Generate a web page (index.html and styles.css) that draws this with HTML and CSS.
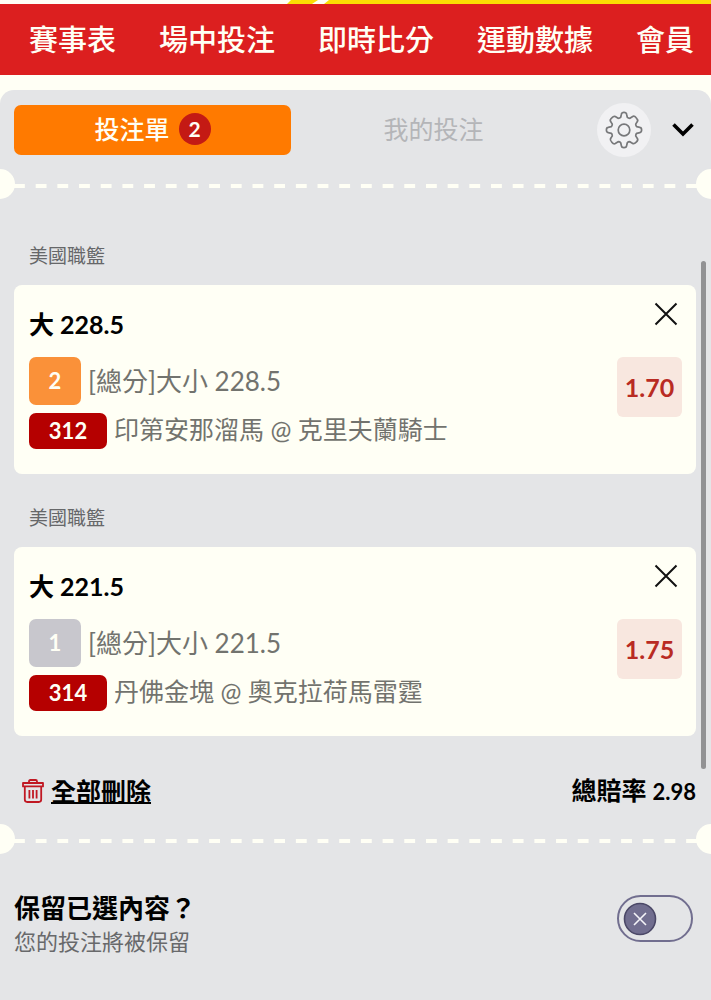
FILE: index.html
```html
<!DOCTYPE html>
<html lang="zh-Hant">
<head>
  <meta charset="UTF-8">
  <meta name="viewport" content="width=device-width, initial-scale=1.0">
  <title>投注單</title>
  <link rel="stylesheet" href="styles.css">
</head>
<body>
  <div class="top-strip">
    <svg width="100%" height="4">
      <path d="M291 0h27l-6 4h-25z" fill="#fbdd04"/>
      <path d="M329 0h4000v4H324z" fill="#fbdd04"/>
    </svg>
  </div>
  <nav class="main-nav">
    <a href="#">賽事表</a>
    <a href="#">場中投注</a>
    <a href="#">即時比分</a>
    <a href="#">運動數據</a>
    <a href="#">會員</a>
  </nav>

  <main class="slip">
    <div class="slip-header">
      <div class="tabs">
        <button class="tab active">投注單 <span class="count">2</span></button>
        <button class="tab">我的投注</button>
      </div>
      <button class="settings" aria-label="設定">
        <svg width="38" height="38" viewBox="0 0 38 38" fill="none" stroke="#77787a" stroke-width="1.7" stroke-linejoin="round">
          <path d="M16.4 3.2Q16.7 1.4 19 1.4T21.6 3.2L22.3 6.2Q23.1 7.3 24.9 7.3L27.7 5.5Q29.3 4.6 31.2 6.8Q33.2 8.7 32.5 10.3L30.7 13.1Q30.7 14.9 31.8 15.7L34.8 16.4Q36.6 16.7 36.6 19T34.8 21.6L31.8 22.3Q30.7 23.1 30.7 24.9L32.5 27.7Q33.4 29.3 31.2 31.2Q29.3 33.2 27.7 32.5L24.9 30.7Q23.1 30.7 22.3 31.8L21.6 34.8Q21.3 36.6 19 36.6T16.4 34.8L15.7 31.8Q14.9 30.7 13.1 30.7L10.3 32.5Q8.7 33.4 6.8 31.2Q4.8 29.3 5.5 27.7L7.3 24.9Q7.3 23.1 6.2 22.3L3.2 21.6Q1.4 21.3 1.4 19T3.2 16.4L6.2 15.7Q7.3 14.9 7.3 13.1L5.5 10.3Q4.6 8.7 6.8 6.8Q8.7 4.8 10.3 5.5L13.1 7.3Q14.9 7.3 15.7 6.2Z"/>
          <circle cx="19" cy="19" r="5.8"/>
        </svg>
      </button>
      <button class="collapse" aria-label="收起">
        <svg width="22" height="14" viewBox="0 0 22 14" fill="none" stroke="#000" stroke-width="3.6">
          <path d="M1.5 1.5L11 11L20.5 1.5"/>
        </svg>
      </button>
    </div>

    <div class="divider">
      <svg height="4"><line x1="0" y1="2" x2="100%" y2="2" pathLength="63"/></svg>
    </div>

    <div class="bets">
      <section class="bet">
        <h2 class="league">美國職籃</h2>
        <div class="card">
          <div class="card-head">
            <h3>大 228.5</h3>
            <button class="close" aria-label="移除">
              <svg width="24" height="24" viewBox="0 0 24 24" stroke="#111" stroke-width="2"><path d="M1.5 1.5l21 21M22.5 1.5l-21 21"/></svg>
            </button>
          </div>
          <div class="card-body">
            <div class="lines">
              <div class="line"><span class="badge pick orange">2</span>[總分]大小 228.5</div>
              <div class="line teams"><span class="badge game">312</span>印第安那溜馬 @ 克里夫蘭騎士</div>
            </div>
            <span class="odds">1.70</span>
          </div>
        </div>
      </section>

      <section class="bet">
        <h2 class="league">美國職籃</h2>
        <div class="card">
          <div class="card-head">
            <h3>大 221.5</h3>
            <button class="close" aria-label="移除">
              <svg width="24" height="24" viewBox="0 0 24 24" stroke="#111" stroke-width="2"><path d="M1.5 1.5l21 21M22.5 1.5l-21 21"/></svg>
            </button>
          </div>
          <div class="card-body">
            <div class="lines">
              <div class="line"><span class="badge pick grey">1</span>[總分]大小 221.5</div>
              <div class="line teams"><span class="badge game">314</span>丹佛金塊 @ 奧克拉荷馬雷霆</div>
            </div>
            <span class="odds">1.75</span>
          </div>
        </div>
      </section>
      <div class="scroll-thumb"></div>
    </div>

    <div class="summary">
      <button class="clear-all">
        <svg width="22" height="24" viewBox="0 0 22 24" fill="none" stroke="#c01823" stroke-width="1.8" stroke-linejoin="round">
          <path d="M1 4h20v3.4H1zM7 4V2.4Q7 1 8.4 1h5.2Q15 1 15 2.4V4M2.8 7.4V20.6Q2.8 23 5.2 23h11.6Q19.2 23 19.2 20.6V7.4M7.4 11v8.4M11 11v8.4M14.6 11v8.4"/>
        </svg>
        <span>全部刪除</span>
      </button>
      <div class="total">總賠率 <span>2.98</span></div>
    </div>

    <div class="divider">
      <svg height="4"><line x1="0" y1="2" x2="100%" y2="2" pathLength="63"/></svg>
    </div>

    <div class="keep">
      <label for="keepToggle">
        <span class="keep-title">保留已選內容？</span>
        <span class="keep-note">您的投注將被保留</span>
      </label>
      <div class="switch">
        <input type="checkbox" id="keepToggle" role="switch">
        <svg class="knob" width="34" height="34" viewBox="0 0 34 34">
          <circle cx="17" cy="17" r="15.5" fill="#716e8f" stroke="#4b4867" stroke-width="1.6"/>
          <path d="M11 11l12 12M23 11L11 23" stroke="#f4f4f8" stroke-width="1.6"/>
        </svg>
      </div>
    </div>
  </main>
</body>
</html>
```
FILE: styles.css
```css
* {
  margin: 0;
  padding: 0;
  box-sizing: border-box;
}
body {
  font-family: Lato, "Noto Sans CJK TC", sans-serif;
  background: #fffff5;
  color: #000;
  min-height: 100vh;
  display: flex;
  flex-direction: column;
  overflow-x: hidden;
}
button {
  font: inherit;
  color: inherit;
  background: none;
  border: none;
  cursor: pointer;
}
svg { display: block; }

.top-strip {
  height: 4px;
  overflow: hidden;
}
.main-nav {
  display: flex;
  align-items: center;
  gap: 43px;
  height: 71px;
  padding-left: 29px;
  background: #dc1f1f;
  overflow: hidden;
}
.main-nav a {
  color: #fffff5;
  font-size: 29px;
  font-weight: 500;
  line-height: 40px;
  text-decoration: none;
  white-space: nowrap;
}

.slip {
  flex: 1;
  margin-top: 15px;
  padding-top: 13px;
  background: #e4e5e7;
  border-radius: 14px 14px 0 0;
}
.slip-header {
  display: flex;
  align-items: center;
  height: 54px;
  padding: 0 17px 0 14px;
}
.tabs {
  flex: 1;
  display: flex;
  gap: 4px;
}
.tab {
  flex: 1;
  display: flex;
  justify-content: center;
  align-items: center;
  gap: 9px;
  height: 50px;
  border-radius: 7px;
  font-size: 25px;
  line-height: 32px;
  padding-bottom: 2px;
  color: #b4b5b8;
}
.tab.active {
  background: #ff7a00;
  color: #fffff5;
  font-weight: 500;
}
.count {
  width: 32px;
  height: 32px;
  border-radius: 50%;
  background: #c41a14;
  font-size: 21px;
  font-weight: 700;
}
.settings {
  display: flex;
  justify-content: center;
  align-items: center;
  width: 54px;
  height: 54px;
  margin-left: 25px;
  border-radius: 50%;
  background: #f1f1f3;
}
.collapse { margin-left: 21px; }

/* perforated ticket edge */
.divider {
  position: relative;
  height: 30px;
  margin-top: 12px;
  padding: 15px 14px 0;
}
.divider::before,
.divider::after {
  content: "";
  position: absolute;
  top: 0;
  width: 30px;
  height: 30px;
  border-radius: 50%;
  background: #fffff5;
}
.divider::before { left: -15px; }
.divider::after { right: -15px; }
.divider svg { width: 100%; }
.divider line {
  stroke: #fffff5;
  stroke-width: 4;
  stroke-dasharray: 1 1;
}

.bets {
  position: relative;
  display: flex;
  flex-direction: column;
  gap: 30px;
  padding: 43px 15px 33px 14px;
}
.scroll-thumb {
  position: absolute;
  top: 62px;
  right: 5px;
  bottom: 0;
  width: 5px;
  border-radius: 3px;
  background: #929294;
}
.league {
  padding-left: 15px;
  margin-bottom: 15px;
  font-size: 19px;
  font-weight: 400;
  line-height: 28px;
  color: #666769;
}
.card {
  padding: 13px 14px 25px 15px;
  border-radius: 8px;
  background: #fffff5;
}
.card-head,
.card-body {
  display: flex;
  justify-content: space-between;
  align-items: flex-start;
}
.card-head { margin-bottom: 7px; }
.card-head h3 {
  font-size: 25px;
  font-weight: 700;
  line-height: 52px;
}
.close {
  display: flex;
  justify-content: center;
  align-items: center;
  width: 32px;
  height: 32px;
}
.lines {
  display: flex;
  flex-direction: column;
  gap: 8px;
}
.line {
  display: flex;
  align-items: center;
  gap: 7px;
  font-size: 26px;
  line-height: 36px;
  color: #72736e;
}
.line.teams {
  align-items: flex-start;
  height: 36px;
  font-size: 25px;
  line-height: 32px;
}
.badge {
  border-radius: 7px;
  color: #fffff5;
  font-size: 22px;
  font-weight: 700;
  text-align: center;
}
.pick {
  width: 52px;
  line-height: 48px;
}
.orange { background: #fa9139; }
.grey { background: #c8c7cd; }
.game {
  width: 78px;
  line-height: 36px;
  background: #b50000;
}
.odds {
  width: 65px;
  border-radius: 6px;
  background: #f8e7df;
  color: #b92b23;
  font-size: 25px;
  font-weight: 700;
  line-height: 60px;
  text-align: center;
}

.summary {
  display: flex;
  justify-content: space-between;
  align-items: center;
  margin-top: 5px;
  padding: 0 15px 0 22px;
  font-size: 25px;
  font-weight: 700;
  line-height: 32px;
}
.clear-all {
  display: flex;
  align-items: center;
  gap: 7px;
}
.clear-all span {
  text-decoration: underline;
  text-decoration-thickness: 2px;
}
.total span { font-size: 22px; }
.summary + .divider { margin-top: 16px; }

.keep {
  display: flex;
  justify-content: space-between;
  align-items: flex-start;
  margin-top: 37px;
  padding: 0 18px 40px 14px;
}
.keep label span {
  display: block;
  line-height: 34px;
}
.keep-title {
  font-size: 26px;
  font-weight: 700;
}
.keep-note {
  font-size: 22px;
  color: #68696b;
}
.switch {
  position: relative;
  margin-top: 4px;
}
.switch input {
  appearance: none;
  display: block;
  width: 76px;
  height: 47px;
  border: 2px solid #716e8f;
  border-radius: 24px;
  cursor: pointer;
}
.knob {
  position: absolute;
  top: 7px;
  left: 6px;
  pointer-events: none;
  transition: 0.3s;
}
.switch input:checked + .knob { left: 36px; }
```
